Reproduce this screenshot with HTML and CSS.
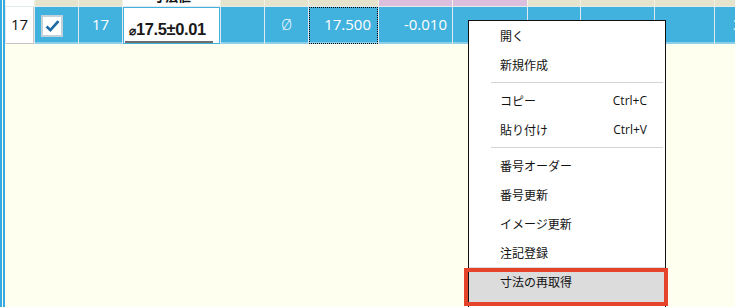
FILE: index.html
```html
<!DOCTYPE html>
<html lang="ja">
<head>
<meta charset="utf-8">
<title>Grid context menu</title>
<link rel="stylesheet" href="styles.css">
</head>
<body>
<div class="screen">
  <div class="edge">
    <div class="grid">
      <div class="hdr">
        <div class="c w0 h-white"></div>
        <div class="c w1 h-beige"></div>
        <div class="c w2 h-beige"></div>
        <div class="c w3 h-white h-label"><span>寸法値</span></div>
        <div class="c w4 h-beige"></div>
        <div class="c w5 h-beige"></div>
        <div class="c w6 h-beige"></div>
        <div class="c w7 h-purple"></div>
        <div class="c w8 h-purple"></div>
        <div class="c w9 h-beige"></div>
        <div class="c w10 h-beige"></div>
        <div class="c w11 h-beige"></div>
        <div class="c w12 h-beige"></div>
      </div>
      <div class="row">
        <div class="c w0 num">17</div>
        <div class="c w1 sel chk-cell">
          <span class="chk">
            <svg width="20" height="20" viewBox="0 0 20 20"><path d="M4 10.5 L8.2 14.6 L17.2 4.6" fill="none" stroke="#1c6aa6" stroke-width="3"/></svg>
          </span>
        </div>
        <div class="c w2 sel center">17</div>
        <div class="c w3 dim-cell"><span class="dim"><span class="dia">⌀</span>17.5±0.01</span></div>
        <div class="c w4 sel"></div>
        <div class="c w5 sel center thin">Ø</div>
        <div class="c w6 sel right focus">17.500</div>
        <div class="c w7 sel right pad5">-0.010</div>
        <div class="c w8 sel"></div>
        <div class="c w9 sel"></div>
        <div class="c w10 sel"></div>
        <div class="c w11 sel"></div>
        <div class="c w12 sel lead">3</div>
      </div>
    </div>
  </div>

  <div class="menu">
    <div class="item">開く</div>
    <div class="item">新規作成</div>
    <div class="sep"></div>
    <div class="item"><span>コピー</span><span class="key">Ctrl+C</span></div>
    <div class="item"><span>貼り付け</span><span class="key">Ctrl+V</span></div>
    <div class="sep"></div>
    <div class="item">番号オーダー</div>
    <div class="item">番号更新</div>
    <div class="item">イメージ更新</div>
    <div class="item">注記登録</div>
    <div class="item hot">寸法の再取得</div>
  </div>
  <div class="callout"></div>
</div>
</body>
</html>
```

FILE: styles.css
```css
html, body {
  margin: 0;
  padding: 0;
  width: 735px;
  height: 307px;
  overflow: hidden;
  background: #fffff0;
}

.screen {
  position: relative;
  height: 307px;
  border-left: 2px solid #36aae3;
  font-family: "Open Sans", "Noto Sans", sans-serif;
}

.edge {
  margin-left: 1px;
  border-left: 2px solid #36aae3;
  height: 307px;
}

.grid {
  display: flex;
  flex-direction: column;
  gap: 1px;
  background: #e3ebee;
  width: 780px;
}

.hdr, .row {
  display: flex;
  gap: 1px;
  padding-left: 1px;
}

.hdr { height: 6px; background: #f2f2ea; }
.row { height: 37px; background: #dfe9ee; }

.c { flex: 0 0 auto; box-sizing: border-box; overflow: hidden; }
.w0 { width: 28px; }
.w1 { width: 43px; }
.w2 { width: 43px; }
.w3 { width: 97px; }
.w4 { width: 43px; }
.w5 { width: 43px; }
.w6 { width: 69px; }
.w7 { width: 73px; }
.w8 { width: 74px; }
.w9 { width: 52px; }
.w10 { width: 73px; }
.w11 { width: 59px; }
.w12 { width: 60px; }

.h-white { background: #ffffff; }
.h-beige { background: #e6e4cc; }
.h-purple { background: #dcbfdd; }

.h-label {
  display: flex;
  align-items: flex-end;
  justify-content: center;
  padding-bottom: 4px;
  font-family: "Noto Sans CJK JP", sans-serif;
  font-weight: 700;
  font-size: 13px;
  line-height: 13px;
  color: #111;
}
.h-label span { flex: 0 0 auto; }

.sel {
  background: #41b1de;
  color: #ffffff;
  font-size: 15px;
  line-height: 35px;
  box-shadow: inset 0 -2px 0 #8ccfea;
}

.center { text-align: center; }
.right { text-align: right; }
.pad5 { padding-right: 5px; }
.lead { padding-left: 18px; }
.thin { font-weight: 300; font-size: 14px; }

.num {
  background: #ffffff;
  color: #111;
  font-size: 15px;
  line-height: 35px;
  text-align: center;
  border-right: 1px solid #c9c9c9;
  border-bottom: 1px solid #c4c4c4;
}

.chk-cell { padding: 8px 0 0 6px; }
.chk {
  display: flex;
  align-items: center;
  justify-content: center;
  width: 22px;
  height: 22px;
  box-sizing: border-box;
  border: 2px solid #c2d2da;
  background: #ffffff;
}

.dim-cell {
  background: #ffffff;
  border: 1px solid #41b1de;
  display: flex;
  align-items: flex-start;
  padding: 12px 0 0 1px;
}
.dim {
  display: block;
  width: 88px;
  box-sizing: border-box;
  padding-left: 4px;
  font-family: "Liberation Sans", Arial, sans-serif;
  font-weight: 700;
  font-size: 16.5px;
  letter-spacing: -0.4px;
  line-height: 19px;
  color: #1a1a1a;
  border-bottom: 2px solid #6e6e6e;
  white-space: nowrap;
}
.dia { font-size: 12px; letter-spacing: 0; }

.focus {
  outline: 1px dotted #000;
  outline-offset: -1px;
  padding-right: 7px;
}

.menu {
  position: absolute;
  left: 466px;
  top: 20px;
  width: 198px;
  height: 300px;
  box-sizing: border-box;
  background: #ffffff;
  border: 1px solid #111;
  padding-top: 0;
  font-family: "Noto Sans CJK JP", sans-serif;
  font-size: 12px;
  color: #111;
}

.item {
  height: 29px;
  line-height: 29px;
  padding-left: 31px;
  padding-right: 18px;
  display: flex;
  justify-content: space-between;
  white-space: nowrap;
}

.key {
  font-family: "Open Sans", "Noto Sans", sans-serif;
  font-size: 12px;
}

.sep {
  height: 7px;
  display: flex;
  align-items: center;
  padding-left: 22px;
  padding-right: 2px;
}
.sep::before {
  content: "";
  display: block;
  flex: 1;
  height: 1px;
  background: #d4d4d4;
}

.hot {
  background: #dcdcdc;
  height: 36px;
  align-items: flex-start;
}

.callout {
  position: absolute;
  left: 462px;
  top: 268px;
  width: 204px;
  height: 38px;
  box-sizing: border-box;
  border: 4px solid #e5442b;
}
```
